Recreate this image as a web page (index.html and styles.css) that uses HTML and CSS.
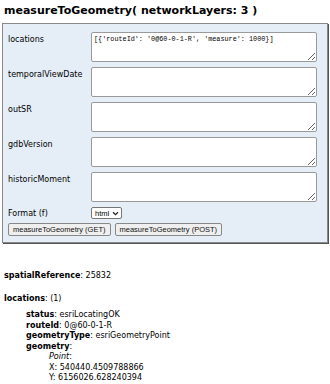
FILE: index.html
```html
<!DOCTYPE html>
<html lang="en">
<head>
    <meta charset="UTF-8">
    <title>measureToGeometry (LRServer)</title>
    <link rel="stylesheet" href="styles.css">
</head>
<body>
    <h2 class="title">measureToGeometry( networkLayers: 3 )</h2>

    <form class="form-box">
        <div class="form-row">
            <label class="form-label">locations</label>
            <textarea class="form-input">[{'routeId': '0@60-0-1-R', 'measure': 1000}]</textarea>
        </div>
        <div class="form-row">
            <label class="form-label">temporalViewDate</label>
            <textarea class="form-input"></textarea>
        </div>
        <div class="form-row">
            <label class="form-label">outSR</label>
            <textarea class="form-input"></textarea>
        </div>
        <div class="form-row">
            <label class="form-label">gdbVersion</label>
            <textarea class="form-input"></textarea>
        </div>
        <div class="form-row">
            <label class="form-label">historicMoment</label>
            <textarea class="form-input"></textarea>
        </div>
        <div class="form-row format-row">
            <label class="form-label">Format (f)</label>
            <span class="select">html
                <svg class="select-arrow" viewBox="0 0 8 6" width="7" height="5">
                    <path d="M1 1.5 L4 4.5 L7 1.5" fill="none" stroke="#222" stroke-width="1.4"/>
                </svg>
            </span>
        </div>
        <div class="button-row">
            <button type="button" class="btn">measureToGeometry (GET)</button>
            <button type="button" class="btn">measureToGeometry (POST)</button>
        </div>
    </form>

    <div class="results">
        <p class="result-line"><b>spatialReference</b>: 25832</p>
        <p class="result-line list-head"><b>locations</b>: (1)</p>
        <ul class="location-list">
            <li><b>status</b>: esriLocatingOK</li>
            <li><b>routeId</b>: 0@60-0-1-R</li>
            <li><b>geometryType</b>: esriGeometryPoint</li>
            <li><b>geometry</b>:
                <ul class="geometry-list">
                    <li><i>Point</i>:</li>
                    <li>X: 540440.4509788866</li>
                    <li>Y: 6156026.628240394</li>
                </ul>
            </li>
        </ul>
    </div>
</body>
</html>
```

FILE: styles.css
```css
body {
    margin: 0;
    padding: 0 4px;
    font-family: "DejaVu Sans", Verdana, sans-serif;
    font-size: 8px;
    color: #000;
    background: #fff;
}

.title {
    margin: 0;
    padding-top: 4px;
    font-size: 11px;
    font-weight: bold;
    line-height: 14px;
}

.form-box {
    margin: 5px -2px 0 -2px;
    padding: 8px 10px 6px 5px;
    background-color: #e5eef7;
    border: 1px solid #888;
    box-shadow: 1px 1px 0 #555;
}

.form-row {
    display: flex;
    align-items: flex-start;
    margin-bottom: 5px;
}

.form-label {
    width: 83px;
    padding-top: 3px;
    flex-shrink: 0;
}

.form-input {
    flex: 1;
    height: 30px;
    box-sizing: border-box;
    margin: 0;
    padding: 2px 2px;
    border: 1px solid #999;
    border-radius: 2px;
    font-family: "Liberation Mono", monospace;
    font-size: 6.8px;
    resize: vertical;
}

.format-row {
    align-items: center;
    margin-top: 5px;
    margin-bottom: 4px;
}

.format-row .form-label {
    padding-top: 0;
}

.select {
    display: inline-flex;
    align-items: center;
    gap: 3px;
    height: 12px;
    padding: 0 2px 0 3px;
    box-sizing: border-box;
    background: #fff;
    border: 1px solid #777;
    border-radius: 2px;
    font-family: "Liberation Sans", Arial, sans-serif;
    font-size: 7.5px;
}

.button-row {
    display: flex;
    gap: 4px;
}

.btn {
    height: 13px;
    padding: 0 4px;
    font-family: "Liberation Sans", Arial, sans-serif;
    font-size: 7.5px;
    background: #efefef;
    border: 1px solid #888;
    border-radius: 2px;
    color: #111;
}

.results {
    margin-top: 27px;
}

.result-line {
    margin: 0 0 12px 0;
    line-height: 11px;
}

.list-head {
    margin-bottom: 6px;
}

.location-list,
.geometry-list {
    list-style: none;
    margin: 0;
    padding-left: 22px;
    line-height: 10.5px;
}

.geometry-list {
    padding-left: 23px;
}
```
